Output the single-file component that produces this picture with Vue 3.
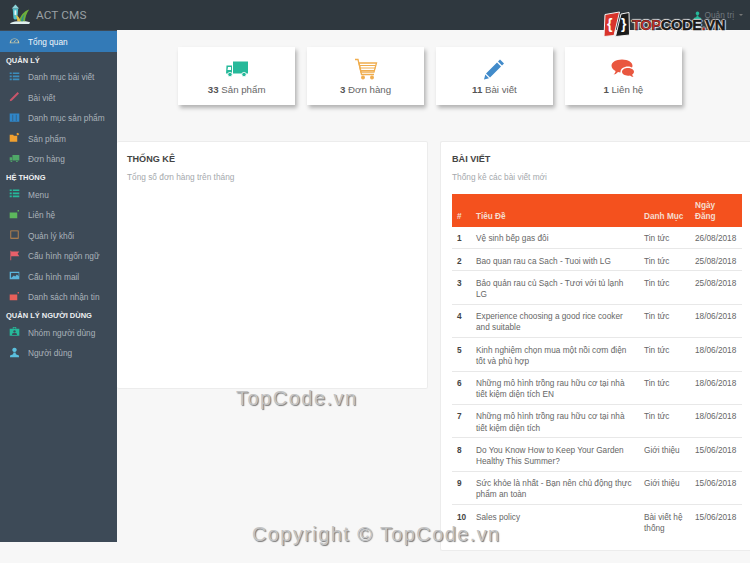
<script setup>
const menu = [
  { t: 'Danh mục bài viết', i: 'list', c: '#3c8dbc' },
  { t: 'Bài viết', i: 'pen', c: '#c9566b' },
  { t: 'Danh mục sản phẩm', i: 'cols', c: '#2f86c9' },
  { t: 'Sản phẩm', i: 'folder', c: '#f0a030' },
  { t: 'Đơn hàng', i: 'truck', c: '#4fa868' }
]
const system = [
  { t: 'Menu', i: 'list', c: '#26b99a' },
  { t: 'Liên hệ', i: 'mail', c: '#5cb85c' },
  { t: 'Quản lý khối', i: 'box', c: '#c98a4b' },
  { t: 'Cấu hình ngôn ngữ', i: 'flag', c: '#e8606a' },
  { t: 'Cấu hình mail', i: 'pic', c: '#5bb5dc' },
  { t: 'Danh sách nhận tin', i: 'mail', c: '#e8605a' }
]
const users = [
  { t: 'Nhóm người dùng', i: 'group', c: '#26b99a' },
  { t: 'Người dùng', i: 'user', c: '#5bc0de' }
]
const groups = [
  { h: 'QUẢN LÝ', items: menu },
  { h: 'HỆ THỐNG', items: system },
  { h: 'QUẢN LÝ NGƯỜI DÙNG', items: users }
]
const paths = {
  list: 'M1 2h3v2.500H1zM5.500 2H15v2.500H5.500zM1 6.500h3V9H1zM5.500 6.500H15V9H5.500zM1 11h3v2.500H1zM5.500 11H15v2.500H5.500z',
  pen: 'M12.500 1.500l2 2L4 14l-3 1 1-3z',
  cols: 'M1 2h14v12H1zM5.200 4v9h.8V4zM10 4v9h.8V4z',
  folder: 'M1 4h5l1 1.500h5V14H1zM12.500 1l2.500 2-2 2-2.500-2z',
  truck: 'M5 3h10v8H5zM1 6h3.500v5H1zM2 11.500a1.500 1.500 0 1 0 3 0zM10 11.500a1.500 1.500 0 1 0 3 0z',
  mail: 'M1 5h11v8.500H1zM12.500 1.500h2v2h-2z',
  box: 'M2 2h12v12H2zM3.200 3.200v9.600h9.600V3.200z',
  flag: 'M2 1h1.200v14H2zM3.200 2H15l-2.500 3.500L15 9H3.200z',
  pic: 'M1 2.500h14v11H1zM3 4.500v7l4-3.500 2 1.500 2.500-3 2.500 2.500v-4.500z',
  group: 'M5.500 1.500h5V4H15v10H1V4h4.500zM6.500 2.500V4h3V2.500zM8 6a1.800 1.800 0 1 0 .01 0zM4.500 13h7v-1.500c0-2-7-2-7 0z',
  user: 'M8 1a3.200 3.200 0 1 1-.01 0zM6.500 8h3l.5 2.500 4.500 2V15h-13v-2.500l4.500-2z'
}
const stats = [
  { n: '33', t: 'Sản phẩm', k: 'truck' },
  { n: '3', t: 'Đơn hàng', k: 'cart' },
  { n: '11', t: 'Bài viết', k: 'pencil' },
  { n: '1', t: 'Liên hệ', k: 'chat' }
]
const posts = [
  ['1', 'Vệ sinh bếp gas đôi', 'Tin tức', '26/08/2018'],
  ['2', 'Bao quan rau ca Sach - Tuoi with LG', 'Tin tức', '25/08/2018'],
  ['3', 'Bảo quản rau củ Sạch - Tươi với tủ lạnh LG', 'Tin tức', '25/08/2018'],
  ['4', 'Experience choosing a good rice cooker and suitable', 'Tin tức', '18/06/2018'],
  ['5', 'Kinh nghiệm chọn mua một nồi cơm điện tốt và phù hợp', 'Tin tức', '18/06/2018'],
  ['6', 'Những mô hình trồng rau hữu cơ tại nhà tiết kiệm diện tích EN', 'Tin tức', '18/06/2018'],
  ['7', 'Những mô hình trồng rau hữu cơ tại nhà tiết kiệm diện tích', 'Tin tức', '18/06/2018'],
  ['8', 'Do You Know How to Keep Your Garden Healthy This Summer?', 'Giới thiệu', '15/06/2018'],
  ['9', 'Sức khỏe là nhất - Bạn nên chủ động thực phẩm an toàn', 'Giới thiệu', '15/06/2018'],
  ['10', 'Sales policy', 'Bài viết hệ thống', '15/06/2018']
]
</script>

<template>
  <div class="page">
    <header class="top">
      <div class="brand">
        <svg class="logo" viewBox="0 0 24 24" width="22" height="22">
          <path d="M1 22c5-2.500 15-3 22-1l-1 2H2z" fill="#dfeeee" />
          <path d="M4 6h6l-.8 10.500c-.1 2-4 2-4.300 0z" fill="#4fc0cc" />
          <path d="M3 6l4-4.500L11 6z" fill="#8fd4da" />
          <path d="M6 8h2v5H6z" fill="#e8f6f6" />
          <path d="M11 20c1-6 5-11 11-13-3 4-4.500 9-4.500 13z" fill="#6fae3a" />
          <path d="M9 20c0-3-.5-5-2-7 3 1 5 3 5.500 7z" fill="#e0c04a" />
          <path d="M13 20c.5-3 2-6 4-8-1 3-1.500 5-1.500 8z" fill="#2c8c8c" />
        </svg>
        <span>ACT CMS</span>
      </div>
      <div class="account">
        <svg viewBox="0 0 16 16" width="9" height="9"><path :d="paths.user" fill="#26b99a" /></svg>
        <span>Quản trị</span>
        <i class="caret"></i>
      </div>
      <div class="stamp">
        <svg class="stamp-mark" viewBox="0 0 27 26" width="27" height="26">
          <path d="M2 3.500 16.500 1 11 24.500 1 25.500z" fill="#d9342b" stroke="#f3f3f3" stroke-width="1" />
          <path d="M18 3 26 1.500 26.500 24 12.500 25.500z" fill="#1c1c1c" stroke="#f3f3f3" stroke-width="1" />
          <text x="4" y="18" class="brace">{</text>
          <text x="18" y="18" class="brace">}</text>
        </svg>
        <span class="stamp-text">TOP<b>CODE</b><em>.</em><b>VN</b></span>
      </div>
    </header>

    <div class="body">
      <aside class="side">
        <a class="item active">
          <svg viewBox="0 0 16 16" width="11" height="11">
            <path d="M1 12a7 7 0 1 1 14 0zM3 10.800h10a5 5 0 0 0-10 0zM8 10.500l3-4-4.200 3z" fill="#c8c8a8" fill-rule="evenodd" />
          </svg>
          <span>Tổng quan</span>
        </a>
        <template v-for="g in groups" :key="g.h">
          <div class="group">{{ g.h }}</div>
          <a v-for="m in g.items" :key="m.t" class="item">
            <svg viewBox="0 0 16 16" width="11" height="11">
              <path :d="paths[m.i]" :fill="m.c" fill-rule="evenodd" />
            </svg>
            <span>{{ m.t }}</span>
          </a>
        </template>
      </aside>

      <main class="main">
        <section class="stats">
          <div v-for="s in stats" :key="s.t" class="stat">
            <svg class="stat-icon" viewBox="0 0 24 24" width="24" height="24">
              <g v-if="s.k === 'truck'" fill="#26b99a">
                <path d="M8 4.500h15v12H8zM1.500 8.500H7v8H1z" />
                <circle cx="5" cy="17.500" r="2.200" stroke="#fff" stroke-width=".8" />
                <circle cx="19" cy="17.500" r="2.200" stroke="#fff" stroke-width=".8" />
                <path d="M3 10h3v3H2.500z" fill="#fff" />
              </g>
              <g v-else-if="s.k === 'cart'" fill="none" stroke="#f0ad4e" stroke-width="1.300">
                <path d="M1 2.500h3l3.500 15H20" />
                <path d="M5 6h17.500l-2.500 9H7z" />
                <path d="M6 8.500h16M6.500 11h15M7 13.500h14" stroke-width="1" />
                <circle cx="9" cy="20.500" r="1.300" fill="#f0ad4e" />
                <circle cx="18" cy="20.500" r="1.300" fill="#f0ad4e" />
              </g>
              <g v-else-if="s.k === 'pencil'" fill="#428bca">
                <path d="M18 2.500l4 4-2 2-4-4zM15 5.500l4 4L8 20.500l-4-4zM3.300 17.500l3.700 3.700L2 22.500z" />
              </g>
              <g v-else fill="#e9573f">
                <path d="M11 2.500c6 0 10.500 2.800 10.500 6.300 0 .7-.2 1.300-.5 1.800-1-.7-2.500-1.100-4-1.100-4.300 0-7.500 2.400-7.500 5.200v.7c-.9 0-1.800-.2-2.500-.4C5.500 16.700 4 17.500 2.500 17.500 4 16.500 4.500 15.300 4.500 14 2.300 12.800.5 11 .5 8.800.5 5.300 5 2.500 11 2.500z" />
                <path d="M17 11c3.300 0 6 1.700 6 3.800 0 1.100-.7 2-1.800 2.700.1.900.5 1.700 1.300 2.500-1.500-.1-2.700-.8-3.500-1.500-.6.100-1.300.2-2 .2-3.300 0-6-1.700-6-3.900S13.700 11 17 11z" />
              </g>
            </svg>
            <p><b>{{ s.n }}</b> {{ s.t }}</p>
          </div>
        </section>

        <section class="panels">
          <div class="panel chart">
            <h2>THỐNG KÊ</h2>
            <p class="sub">Tổng số đơn hàng trên tháng</p>
          </div>
          <div class="panel posts">
            <h2>BÀI VIẾT</h2>
            <p class="sub">Thống kê các bài viết mới</p>
            <table>
              <thead>
                <tr>
                  <th class="c1">#</th>
                  <th class="c2">Tiêu Đề</th>
                  <th class="c3">Danh Mục</th>
                  <th class="c4">Ngày Đăng</th>
                </tr>
              </thead>
              <tbody>
                <tr v-for="p in posts" :key="p[0]">
                  <td class="c1 num">{{ p[0] }}</td>
                  <td class="title">{{ p[1] }}</td>
                  <td>{{ p[2] }}</td>
                  <td>{{ p[3] }}</td>
                </tr>
              </tbody>
            </table>
          </div>
        </section>
      </main>
    </div>

    <div class="mark mark-one">TopCode.vn</div>
    <div class="mark mark-two">Copyright © TopCode.vn</div>
  </div>
</template>

<style>
html, body { margin: 0; background: #fff; overflow: hidden; }
</style>

<style scoped>
.page {
  position: relative;
  width: 750px;
  height: 563px;
  overflow: hidden;
  background: #f7f7f7;
  font-family: "Liberation Sans", Arial, sans-serif;
  color: #555;
}
.top {
  height: 30px;
  background: #2f383f;
  display: flex;
  align-items: center;
  justify-content: space-between;
  padding: 0 9px;
  box-sizing: border-box;
  position: relative;
}
.brand { display: flex; align-items: center; gap: 5px; }
.brand span {
  font-family: Roboto, sans-serif;
  font-size: 11.800px;
  color: #9aa0a4;
  letter-spacing: .1px;
}
.logo { margin-top: -3px; }
.account {
  display: flex;
  align-items: center;
  gap: 2px;
  font-size: 8.300px;
  color: #6f777c;
  margin-right: -2px;
}
.caret {
  width: 0;
  height: 0;
  margin-left: 3px;
  border: 2.500px solid transparent;
  border-top-color: #777;
  border-bottom: 0;
}
.stamp {
  position: absolute;
  left: 603px;
  top: 11px;
  display: flex;
  align-items: center;
  gap: 2px;
}
.stamp-mark { flex: none; }
.brace {
  font: bold 14px "Liberation Sans", sans-serif;
  fill: #fff;
}
.stamp-text {
  font: bold 15px/1 "Liberation Sans", sans-serif;
  color: #c9302a;
  letter-spacing: -.6px;
  -webkit-text-stroke: .5px #111;
  text-shadow: 0 0 1px #fff, 1px 0 1px #fff, -1px 0 1px #fff, 0 1px 1px #fff, 0 -1px 1px #fff;
}
.stamp-text b { color: #1c1c1c; font-weight: bold; }
.stamp-text em { font-style: normal; color: #e0352b; }

.body { display: flex; height: 533px; }
.side {
  width: 117px;
  height: 512px;
  flex: none;
  background: #3d4a57;
  padding-top: 1px;
  box-sizing: border-box;
}
.item {
  display: flex;
  align-items: center;
  height: 20.500px;
  padding-left: 9px;
  gap: 8px;
  font-size: 8.300px;
  color: #aab2ba;
}
.item svg { flex: none; margin-top: -2px; }
.item.active {
  height: 21px;
  background: #337ab7;
  color: #f2f6fa;
}
.group {
  height: 15px;
  padding: 3px 0 0 6px;
  box-sizing: border-box;
  font-size: 7.500px;
  line-height: 10px;
  font-weight: bold;
  color: #eef0f2;
}
.active + .group { padding-top: 4px; }
.main {
  flex: 1;
  min-width: 0;
}
.stats {
  display: flex;
  gap: 11.600px;
  padding: 17px 0 0 61px;
}
.stat {
  width: 117.300px;
  height: 58px;
  background: #fff;
  box-shadow: 2px 3px 4px rgba(0, 0, 0, .28);
  text-align: center;
  padding-top: 10px;
  box-sizing: border-box;
}
.stat-icon { display: block; margin: 0 auto; }
.stat p { margin: 3px 0 0; font-size: 9.700px; color: #666; }
.stat b { color: #555; }
.panels {
  display: flex;
  align-items: flex-start;
  gap: 12px;
  margin-top: 36px;
}
.panel {
  background: #fff;
  border: 1px solid #ececec;
  border-radius: 2px;
  box-sizing: border-box;
  flex: none;
}
.chart {
  width: 311px;
  height: 248px;
  padding: 11px 10px;
  border-left: 0;
}
.posts {
  width: 320px;
  height: 410px;
  padding: 11px 11px;
  border-right: 0;
}
h2 {
  margin: 0;
  font-size: 9.100px;
  line-height: 12px;
  font-weight: bold;
  color: #444;
}
.sub {
  margin: 7px 0 0;
  font-size: 8.300px;
  line-height: 11px;
  color: #a5a9ad;
}
table {
  width: 290px;
  margin-top: 11px;
  border-collapse: collapse;
  table-layout: fixed;
  font-size: 8.250px;
  line-height: 11.200px;
  color: #666;
}
th {
  background: #f4511e;
  color: #f5ddd0;
  font-weight: bold;
  text-align: left;
  vertical-align: bottom;
  padding: 5px 0 5px 5px;
  height: 33px;
  box-sizing: border-box;
}
th.c4 { padding-right: 8px; }
.c1 { width: 19px; }
.c2 { width: 168px; }
.c3 { width: 51px; }
.c4 { width: 52px; }
td {
  padding: 6.400px 0 3.600px 5px;
  vertical-align: top;
  border-bottom: 1px solid #e8e8e8;
}
td.title { padding-right: 6px; }
tr:last-child td { border-bottom: 0; }
.num { font-weight: bold; color: #444; }
.mark {
  position: absolute;
  font-family: "Liberation Sans", sans-serif;
  font-weight: normal;
  color: #c4c4c4;
  text-shadow: 1px 1px 1px #777;
  white-space: nowrap;
}
.mark-one { left: 236px; top: 387px; font-size: 20px; letter-spacing: 1.500px; }
.mark-two { left: 252px; top: 523px; font-size: 20px; letter-spacing: 1.400px; }
</style>
